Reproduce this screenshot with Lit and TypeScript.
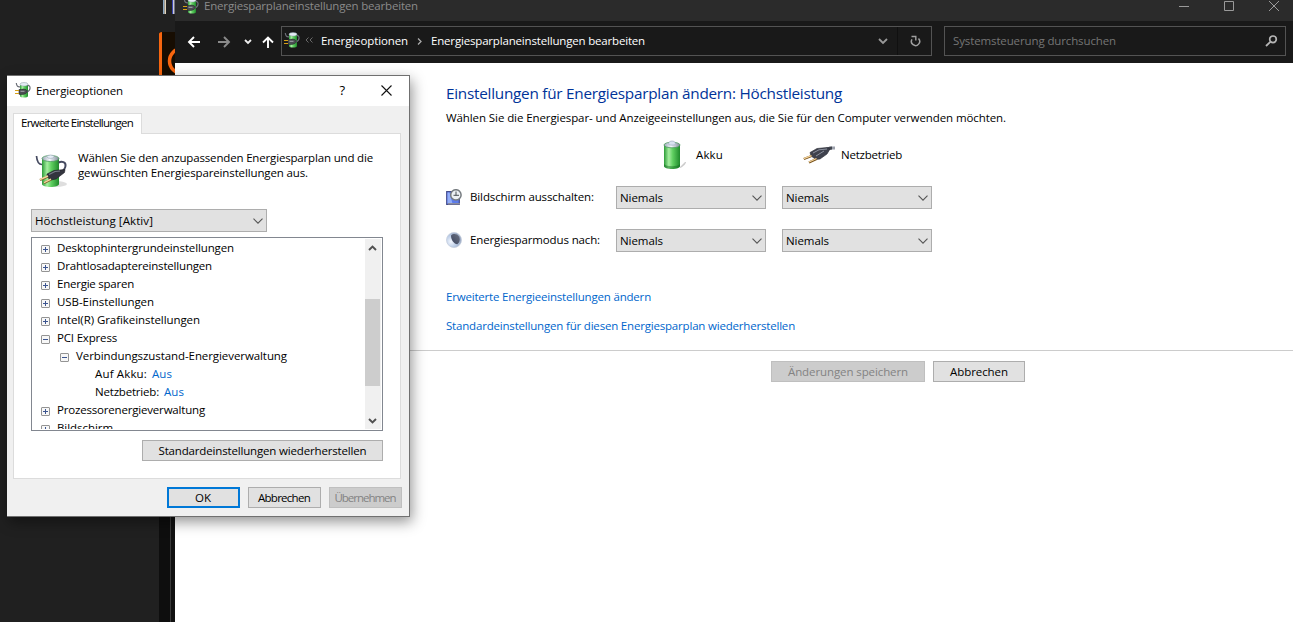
import { LitElement, html, svg, css } from "lit";
import { customElement, property } from "lit/decorators.js";

/* Single-line label whose tracking is adjusted to fill a given width. */
@customElement("fit-label")
class FitLabel extends LitElement {
  @property() text = "";
  @property({ type: Number }) w = 0;
  static styles = css`
    :host { display: block; flex: none; white-space: pre; }
    span { display: inline-block; }
  `;
  updated() {
    const s = this.renderRoot.querySelector("span") as HTMLElement;
    this.style.width = this.w + "px";
    s.style.letterSpacing = "0px";
    const d = this.w - s.getBoundingClientRect().width;
    s.style.letterSpacing = d / this.text.length + "px";
  }
  render() {
    return html`<span>${this.text}</span>`;
  }
}

const T = (text: string, w: number, cls = "") =>
  html`<fit-label class=${cls} .text=${text} .w=${w}></fit-label>`;

const chevron = html`<svg class="chev" width="10" height="6" viewBox="0 0 10 6"><path d="M.5 .7L5 5.200 9.500 .7" fill="none" stroke="#555" stroke-width="1.100"/></svg>`;

const gradients = svg`
  <linearGradient id="g" x1="0" x2="1"><stop offset="0" stop-color="#2c9c38"/><stop offset=".3" stop-color="#a5ee9f"/><stop offset=".55" stop-color="#5fcf60"/><stop offset="1" stop-color="#1f8a2b"/></linearGradient>
  <linearGradient id="m" x1="0" x2="1"><stop offset="0" stop-color="#9aa5b5"/><stop offset=".45" stop-color="#f4f8fc"/><stop offset="1" stop-color="#7d8896"/></linearGradient>`;

const smallPower = html`<svg width="16" height="16" viewBox="0 0 16 16">
  <defs>${gradients}</defs>
  <path d="M5 3v11c0 2 8 2 8 0V3z" fill="url(#g)"/>
  <ellipse cx="9" cy="2.300" rx="4" ry="1.800" fill="#e4edf4" stroke="#8b9aa2" stroke-width=".5"/>
  <path d="M1.300 1C1.600 4.500 3 5 5 4.800M12.500 3.500C16 3 16 8.500 12 10" fill="none" stroke="#6c7078" stroke-width="1.200"/>
  <path d="M4 7.500h2.500C9 6.500 11.500 7.500 12.300 9c0 2-2 3.500-5.800 3.500L4 12.300z" fill="#4a4d52" stroke="#24262a" stroke-width=".6"/>
  <path d="M5.500 9.300h4" stroke="#a4a8ae"/>
  <path d="M0 8.500h4M0 11.500h4" stroke="#d7a017" stroke-width="1.200"/>
</svg>`;

const bigPower = html`<svg width="33" height="34" viewBox="0 0 33 34">
  <defs>${gradients}</defs>
  <ellipse cx="21" cy="30" rx="11" ry="3" fill="#000" opacity=".13"/>
  <path d="M7 4v26c0 4 17 4 17 0V4z" fill="url(#g)"/>
  <ellipse cx="15.500" cy="4.500" rx="8.500" ry="3" fill="url(#m)" stroke="#4f9a62" stroke-width=".8"/>
  <ellipse cx="15.500" cy="2.700" rx="3.500" ry="1.700" fill="#e6eef6" stroke="#97a5b5" stroke-width=".6"/>
  <path d="M1.500 2C2 8 3.500 10.500 7 10.500" fill="none" stroke="#454a60" stroke-width="1.700"/>
  <path d="M23.500 8.500C27 7 31 8 30.500 12c-.3 3-2.500 5-5 7" fill="none" stroke="#454a60" stroke-width="2"/>
  <path d="M12 20l7-3.500 11-1-.5 3-8.500 6.500-5 1-4-3z" fill="#33353f" stroke="#1c1d24" stroke-width=".6"/>
  <path d="M14 20.500l6-3 5-.5" stroke="#777c8a" stroke-width="1.200" fill="none"/>
  <path d="M13 22.500l-8 3.500M16 25.500l-7 3.500" stroke="#7c5b22" stroke-width="2.400"/>
  <path d="M13 22l-8 3.500M16 25.200l-7 3.500" stroke="#f3d79e" stroke-width="1.400"/>
</svg>`;

const battery = html`<svg width="24" height="30" viewBox="0 0 24 30">
  <defs>${gradients}</defs>
  <path d="M17 27l5-5c3-1-1 5-5 6z" fill="#000" opacity=".2"/>
  <path d="M1 5v21c0 4 16 4 16 0V5z" fill="url(#g)"/>
  <path d="M1 24v2c0 4 16 4 16 0v-2c-2 3-14 3-16 0z" fill="#0c651b" opacity=".45"/>
  <ellipse cx="9" cy="5" rx="8" ry="2.800" fill="url(#m)" stroke="#4f9a62" stroke-width=".8"/>
  <path d="M5.500 4c0-4 7-4 7 0 0 1.500-7 1.500-7 0z" fill="#d9e2f0" stroke="#96a3bb" stroke-width=".6"/>
</svg>`;

const plug = html`<svg width="33" height="18" viewBox="0 0 33 18">
  <path d="M22 5C25 1 28 2 32 2" fill="none" stroke="#9ba0ab" stroke-width="3"/>
  <path d="M22 5C24 2 27 2 29 2" fill="none" stroke="#43464f" stroke-width="3"/>
  <path d="M7 6.500l7-4L24 1.500 27 3l-3 5-7 5-4 .5-5-3.500z" fill="#3f424d" stroke="#2a2c35" stroke-width=".6"/>
  <path d="M10 7l6-3.200 8-.8M13 10l8-5" stroke="#8d92a0" stroke-width="1" fill="none"/>
  <path d="M8.500 10L.8 13M13.500 13L6 16.500" stroke="#76511c" stroke-width="2.400"/>
  <path d="M8.500 9.600L.8 12.600M13.500 12.500L6 16" stroke="#f3d29a" stroke-width="1.300"/>
</svg>`;

const screenClock = html`<svg width="16" height="16" viewBox="0 0 16 16">
  <path d="M.7 2.700h12.600v12.600H.7z" fill="#5c7bea" stroke="#454d8c" stroke-width="1.200"/>
  <path d="M1.500 3.500v11h5l-3-11z" fill="#93aef8"/>
  <path d="M2 14.800h12" stroke="#8e8e9c" stroke-width="1.500"/>
  <circle cx="9.900" cy="5.900" r="5.200" fill="#edf1f4" stroke="#777c80" stroke-width="1.500"/>
  <path d="M10 2.500V6.500M7.500 6.300H13" stroke="#4a5055" stroke-width="1"/>
</svg>`;

const moon = html`<svg width="16" height="16" viewBox="0 0 16 16">
  <defs>
    <radialGradient id="b" cx=".3" cy=".6" r=".8"><stop offset="0" stop-color="#f4f8ff"/><stop offset=".5" stop-color="#b9cbe6"/><stop offset="1" stop-color="#8a97b0"/></radialGradient>
    <linearGradient id="d" x1="0" x2="1" y1="1" y2="0"><stop offset="0" stop-color="#3c4560"/><stop offset="1" stop-color="#6a7080"/></linearGradient>
  </defs>
  <circle cx="8" cy="8" r="7.500" fill="url(#b)" stroke="#c5cedd" stroke-width=".8"/>
  <path d="M5 3.500C7 1.300 11 1.500 13 4.500c1.500 3 .6 6-1.700 7.800C8 12 5 8 5 3.500z" fill="url(#d)"/>
</svg>`;

const box = (open: boolean) => html`<svg class="box" width="9" height="9" viewBox="0 0 9 9">
  <rect x=".5" y=".5" width="8" height="8" rx=".5" fill="#f7f7f7" stroke="#949494"/>
  <path d=${open ? "M2 4.500h5" : "M2 4.500h5M4.500 2v5"} stroke="#3c5590"/>
</svg>`;

const base = css`
  :host, * { box-sizing: border-box; }
  :host { font: 11.5px/16px "Open Sans", "Noto Sans", sans-serif; color: #000; }
  svg { display: block; flex: none; }
  .row { display: flex; align-items: center; }
  .combo { display: flex; align-items: center; justify-content: space-between; height: 23px; padding: 0 3px; border: 1px solid #adadad; background: #e1e1e1; }
  .btn { display: flex; align-items: center; justify-content: center; height: 21px; border: 1px solid #adadad; background: #e1e1e1; }
  .btn.off { background: #ccc; border-color: #bfbfbf; color: #838383; }
`;

@customElement("plan-window")
class PlanWindow extends LitElement {
  static styles = [base, css`
    :host { display: flex; flex-direction: column; background: #fff; }
    .title { height: 30px; background: #2b2b2b; color: #8a8a8a; padding-left: 8px; }
    .title fit-label { margin-left: 5px; }
    .controls { margin: 0 0 1px auto; padding-right: 14px; gap: 35px; }
    .nav { height: 42px; background: #191919; color: #fff; padding: 0 7px 2px 12px; }
    .nav > .fwd { margin-left: 16px; }
    .nav > .hist { margin-left: 13px; }
    .nav > .up { margin-left: 10px; }
    .nav > svg { margin-top: 2px; }
    .addr { width: 651px; height: 30px; margin-left: 7px; border: 1px solid #535353; padding-left: 2px; }
    .addr > svg:first-child { margin-bottom: 2px; }
    .addr .more { margin: 0 0 2px 5px; }
    .addr .l1 { margin-left: 8px; }
    .addr .sep { margin-left: 9px; }
    .addr .l2 { margin-left: 9px; }
    .addr .drop { margin: 1px 0 0 auto; }
    .refresh { height: 28px; width: 34px; margin-left: 9px; padding-left: 12px; border-left: 1px solid #101010; }
    .search { width: 342px; height: 30px; margin-left: 12px; border: 1px solid #535353; padding: 0 7px 0 8px; justify-content: space-between; color: #757575; }
    .main { height: 288px; padding: 18px 0 0 271px; border-bottom: 1px solid #ccc; }
    .h { font-size: 15.3px; line-height: 24px; color: #003399; }
    .sub { margin-top: 5px; }
    .grid { display: grid; grid-template-columns: 170px 166px 150px; grid-template-rows: 23px 23px 23px; row-gap: 20px; margin-top: 17px; align-items: center; }
    .grid .combo { width: 150px; }
    .headc { gap: 9px; padding-left: 47px; height: 23px; }
    .headp { gap: 5px; padding-left: 21px; height: 23px; }
    .lab { gap: 8px; margin-top: -2px; }
    .link { color: #0066cc; }
    .k1 { margin-top: 37px; }
    .k2 { margin-top: 13px; }
    .foot { display: flex; gap: 8px; padding: 10px 0 0 596px; }
    .save { width: 154px; }
    .cancel { width: 92px; }
  `];
  render() {
    return html`
      <div class="title row">${smallPower}${T("Energiesparplaneinstellungen bearbeiten", 214)}
        <div class="controls row">
          <svg width="10" height="10"><path d="M0 5.500h10" stroke="#9a9a9a"/></svg>
          <svg width="10" height="10"><path d="M.5 .5h9v9h-9z" fill="none" stroke="#9a9a9a"/></svg>
          <svg width="10" height="10"><path d="M0 0l10 10M10 0L0 10" stroke="#9a9a9a"/></svg>
        </div>
      </div>
      <div class="nav row">
        <svg width="14" height="12" viewBox="0 0 14 12"><path d="M13 6H2M7 1L2 6l5 5" fill="none" stroke="#fff" stroke-width="1.900"/></svg>
        <svg class="fwd" width="14" height="12" viewBox="0 0 14 12"><path d="M1 6h11M7 1l5 5-5 5" fill="none" stroke="#8a8a8a" stroke-width="1.900"/></svg>
        <svg class="hist" width="8" height="6" viewBox="0 0 8 6"><path d="M1 1l3 3 3-3" fill="none" stroke="#eee" stroke-width="1.800"/></svg>
        <svg class="up" width="12" height="12" viewBox="0 0 12 12"><path d="M6 12V1.500M1 6.500l5-5 5 5" fill="none" stroke="#fff" stroke-width="1.900"/></svg>
        <div class="addr row">
          ${smallPower}
          <svg class="more" width="8" height="6" viewBox="0 0 8 6"><path d="M3.500 .5L1 3l2.500 2.500M7.500 .5L5 3l2.500 2.500" fill="none" stroke="#6a6a6a"/></svg>
          ${T("Energieoptionen", 87, "l1")}
          <svg class="sep" width="5" height="7" viewBox="0 0 5 7"><path d="M1 .5l3 3-3 3" fill="none" stroke="#aaa" stroke-width="1.300"/></svg>
          ${T("Energiesparplaneinstellungen bearbeiten", 214, "l2")}
          <svg class="drop" width="10" height="7" viewBox="0 0 10 7"><path d="M1 1l4 4 4-4" fill="none" stroke="#999" stroke-width="1.800"/></svg>
          <div class="refresh row"><svg width="11" height="12" viewBox="0 0 11 12"><path d="M2 4.300A4.100 4.100 0 1 0 8.500 3.600" fill="none" stroke="#a0a0a0" stroke-width="1.500"/><path d="M1.500 1.500H5.800V5.500" fill="none" stroke="#a0a0a0" stroke-width="1.400"/></svg></div>
        </div>
        <div class="search row">${T("Systemsteuerung durchsuchen", 163)}
          <svg width="13" height="12" viewBox="0 0 13 12"><circle cx="8" cy="4.300" r="3.300" fill="none" stroke="#b5b5b5" stroke-width="1.700"/><path d="M5.600 6.700L1 11" stroke="#b5b5b5" stroke-width="1.800"/></svg>
        </div>
      </div>
      <div class="main">
        ${T("Einstellungen für Energiesparplan ändern: Höchstleistung", 396, "h")}
        ${T("Wählen Sie die Energiespar- und Anzeigeeinstellungen aus, die Sie für den Computer verwenden möchten.", 560, "sub")}
        <div class="grid">
          <span></span>
          <div class="row headc">${battery}${T("Akku", 27)}</div>
          <div class="row headp">${plug}${T("Netzbetrieb", 61)}</div>
          <div class="row lab">${screenClock}${T("Bildschirm ausschalten:", 124)}</div>
          <div class="combo">${T("Niemals", 43)}${chevron}</div>
          <div class="combo">${T("Niemals", 43)}${chevron}</div>
          <div class="row lab">${moon}${T("Energiesparmodus nach:", 130)}</div>
          <div class="combo">${T("Niemals", 43)}${chevron}</div>
          <div class="combo">${T("Niemals", 43)}${chevron}</div>
        </div>
        ${T("Erweiterte Energieeinstellungen ändern", 205, "link k1")}
        ${T("Standardeinstellungen für diesen Energiesparplan wiederherstellen", 349, "link k2")}
      </div>
      <div class="foot">
        <div class="btn off save">${T("Änderungen speichern", 120)}</div>
        <div class="btn cancel">${T("Abbrechen", 58)}</div>
      </div>`;
  }
}

type Item = { text: string; w: number; level: number; open?: boolean; value?: string };
const items: Item[] = [
  { text: "Desktophintergrundeinstellungen", w: 177, level: 0 },
  { text: "Drahtlosadaptereinstellungen", w: 155, level: 0 },
  { text: "Energie sparen", w: 77, level: 0 },
  { text: "USB-Einstellungen", w: 97, level: 0 },
  { text: "Intel(R) Grafikeinstellungen", w: 143, level: 0 },
  { text: "PCI Express", w: 60, level: 0, open: true },
  { text: "Verbindungszustand-Energieverwaltung", w: 211, level: 1, open: true },
  { text: "Auf Akku:", w: 52, level: 2, value: "Aus" },
  { text: "Netzbetrieb:", w: 64, level: 2, value: "Aus" },
  { text: "Prozessorenergieverwaltung", w: 148, level: 0 },
  { text: "Bildschirm", w: 56, level: 0 },
];

@customElement("power-dialog")
class PowerDialog extends LitElement {
  static styles = [base, css`
    :host { display: flex; flex-direction: column; background: #f0f0f0; border: 1px solid #707070; border-left: 0; box-shadow: 2px 5px 13px rgba(0,0,0,.42); }
    .title { height: 30px; background: #fff; padding: 0 17px 0 8px; }
    .title > svg:first-child { margin-bottom: 2px; }
    .title fit-label { margin-left: 5px; }
    .q { margin: 0 0 2px auto; font-size: 13px; }
    .x { margin: 0 0 1px 36px; }
    .tab { position: relative; width: 129px; height: 21px; margin: 7px 0 -1px 6px; padding: 1px 0 0 7px; border: 1px solid #dcdcdc; border-bottom: 0; background: #fff; z-index: 1; }
    .panel { width: 388px; height: 346px; margin-left: 6px; border: 1px solid #dcdcdc; background: #fff; padding: 16px 17px 0 17px; }
    .intro { display: flex; gap: 10px; padding-left: 4px; line-height: 15px; }
    .intro svg { margin-top: 4px; }
    .plan { width: 236px; margin-top: 21px; }
    .list { display: flex; width: 352px; height: 194px; margin-top: 5px; border: 1px solid #828790; padding: 1px; overflow: hidden; }
    .tree { flex: 1; overflow: hidden; }
    .item { display: flex; align-items: center; height: 18px; gap: 7px; padding-left: 8px; }
    .item.l1 { padding-left: 27px; }
    .item.l2 { padding-left: 62px; gap: 5px; }
    .box { margin-top: 3px; }
    .val { color: #0066cc; }
    .bar { display: flex; flex-direction: column; width: 16px; background: #f0f0f0; align-items: center; padding: 6px 1px 5px 0; }
    .thumb { width: 15px; height: 87px; margin: 48px 0 auto; background: #cdcdcd; }
    .restore { width: 241px; margin: 9px 0 0 111px; }
    .foot { display: flex; gap: 8px; margin: 8px 7px 0 auto; }
    .foot .btn { width: 73px; }
    .foot .btn fit-label { margin-right: 1px; }
    .foot .ok { border: 2px solid #0078d7; }
  `];
  render() {
    return html`
      <div class="title row">${smallPower}${T("Energieoptionen", 87)}
        <span class="q">?</span>
        <svg class="x" width="11" height="11"><path d="M.5 .5l10 10M10.500 .5l-10 10" stroke="#111" stroke-width="1.100"/></svg>
      </div>
      <div class="tab">${T("Erweiterte Einstellungen", 112)}</div>
      <div class="panel">
        <div class="intro">${bigPower}
          <div>${T("Wählen Sie den anzupassenden Energiesparplan und die", 295)}${T("gewünschten Energiespareinstellungen aus.", 230)}</div>
        </div>
        <div class="combo plan">${T("Höchstleistung [Aktiv]", 118)}${chevron}</div>
        <div class="list">
          <div class="tree">${items.map((i) => html`<div class="item l${i.level}">
            ${i.level < 2 ? box(!!i.open) : ""}${T(i.text, i.w)}${i.value ? T(i.value, 20, "val") : ""}</div>`)}</div>
          <div class="bar">
            <svg width="9" height="6" viewBox="0 0 9 6"><path d="M1 5l3.500-3.500L8 5" fill="none" stroke="#505050" stroke-width="1.900"/></svg>
            <div class="thumb"></div>
            <svg width="9" height="6" viewBox="0 0 9 6"><path d="M1 1l3.500 3.500L8 1" fill="none" stroke="#505050" stroke-width="1.900"/></svg>
          </div>
        </div>
        <div class="btn restore">${T("Standardeinstellungen wiederherstellen", 208)}</div>
      </div>
      <div class="foot">
        <div class="btn ok">${T("OK", 16)}</div>
        <div class="btn">${T("Abbrechen", 52)}</div>
        <div class="btn off">${T("Übernehmen", 61)}</div>
      </div>`;
  }
}

@customElement("app-root")
class AppRoot extends LitElement {
  static styles = css`
    :host { display: block; position: relative; width: 1293px; height: 622px; overflow: hidden; background: #202020; }
    .behind { position: absolute; left: 159px; top: 0; }
    plan-window { position: absolute; left: 175px; top: -9px; width: 1118px; height: 631px; }
    power-dialog { position: absolute; left: 7px; top: 75px; width: 403px; height: 442px; }
  `;
  render() {
    return html`
      <svg class="behind" width="16" height="622">
        <rect x="4" width="1.500" height="14" fill="#8ba9c4"/><rect x="5.500" width="1.500" height="14" fill="#e0d2ba"/>
        <rect x="13" width="1" height="14" fill="#3c46b0"/><rect x="14" width="1.500" height="14" fill="#c9c9d8"/>
        <rect y="32" width="16" height="45" fill="#170d02"/>
        <path d="M0 77V34q0-2 3-2v45z" fill="#f8660f"/>
        <circle cx="23" cy="61" r="12.500" fill="none" stroke="#f8660f" stroke-width="3.500"/>
        <rect y="77" width="11" height="545" fill="#0e0e0e"/><rect x="11" y="77" width="1" height="545" fill="#3a3a3a"/><rect x="12" y="77" width="4" height="545" fill="#111"/>
      </svg>
      <plan-window></plan-window>
      <power-dialog></power-dialog>`;
  }
}
